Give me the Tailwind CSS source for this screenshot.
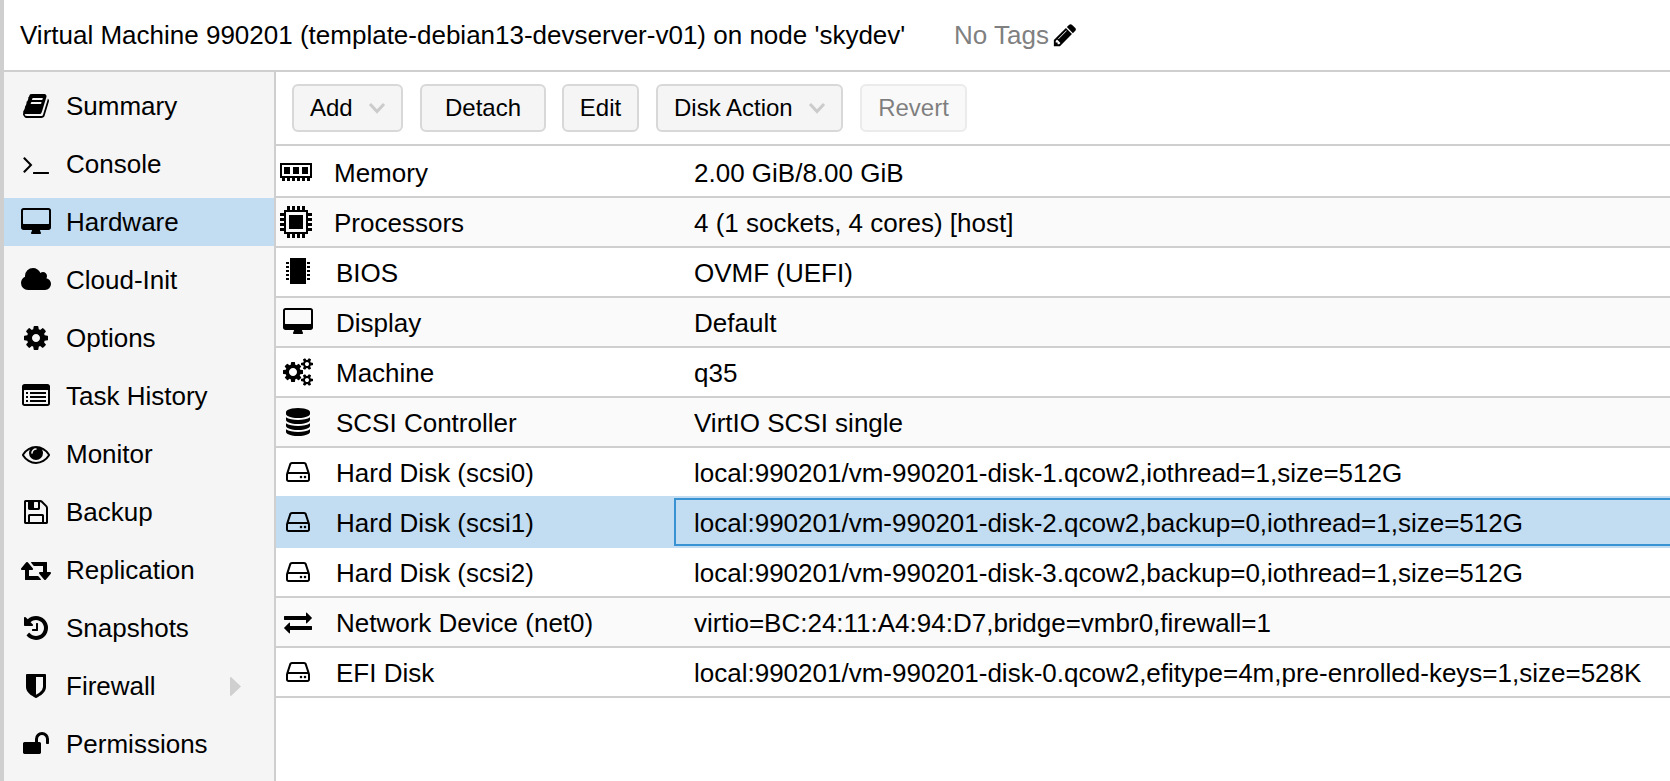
<!DOCTYPE html>
<html lang="en">
<head>
<meta charset="utf-8">
<title>Virtual Machine 990201</title>
<script src="https://cdn.jsdelivr.net/npm/@tailwindcss/browser@4"></script>
</head>
<body class="w-[1670px] h-[781px] overflow-hidden bg-white text-black text-[26px] leading-[30px] whitespace-nowrap font-['Liberation_Sans',Arial,sans-serif]">
<svg class="hidden">
<symbol id="book" viewBox="0 0 1792 1792" overflow="visible"><path d="M1703 478q40 57 18 129l-275 906q-19 64-76.5 107.5t-122.5 43.5h-923q-77 0-148.5-53.5t-99.5-131.5q-24-67-2-127 0-4 3-27t4-37q1-8-3-21.5t-3-19.5q2-11 8-21t16.5-23.5 16.5-23.5q23-38 45-91.5t30-91.5q3-10 .5-30t-.5-28q3-11 17-28t17-23q21-36 42-92t25-90q1-9-2.5-32t.5-28q4-13 22-30.5t22-22.5q19-26 42.5-84.5t27.5-96.5q1-8-3-25.5t-2-26.5q2-8 9-18t18-23 17-21q8-12 16.5-30.5t15-35 16-36 19.5-32 26.5-23.5 36-11.5 47.5 5.5l-1 3q38-9 51-9h761q74 0 114 56t18 130l-274 906q-36 119-71.5 153.5t-128.5 34.5h-869q-27 0-38 15-11 16-1 43 24 70 144 70h923q29 0 56-15.5t35-41.5l300-987q7-22 5-57 38 15 59 43zm-1064 2q-4 13 2 22.5t20 9.5h608q13 0 25.5-9.5t16.5-22.5l21-64q4-13-2-22.5t-20-9.5h-608q-13 0-25.5 9.5t-16.5 22.5zm-83 256q-4 13 2 22.5t20 9.5h608q13 0 25.5-9.5t16.5-22.5l21-64q4-13-2-22.5t-20-9.5h-608q-13 0-25.5 9.5t-16.5 22.5z"/></symbol>
<symbol id="terminal" viewBox="0 0 1792 1792" overflow="visible"><path d="M649 983l-466 466q-10 10-23 10t-23-10l-50-50q-10-10-10-23t10-23l393-393-393-393q-10-10-10-23t10-23l50-50q10-10 23-10t23 10l466 466q10 10 10 23t-10 23zm1079 457v64q0 14-9 23t-23 9h-960q-14 0-23-9t-9-23v-64q0-14 9-23t23-9h960q14 0 23 9t9 23z"/></symbol>
<symbol id="desktop" viewBox="0 0 1792 1792" overflow="visible"><path d="M1728 992v-832q0-13-9.5-22.5t-22.5-9.5h-1600q-13 0-22.5 9.5t-9.5 22.5v832q0 13 9.5 22.5t22.5 9.5h1600q13 0 22.5-9.5t9.5-22.5zm128-832v1088q0 66-47 113t-113 47h-544q0 37 16 77.5t32 71 16 43.5q0 26-19 45t-45 19h-512q-26 0-45-19t-19-45q0-14 16-44t32-70 16-78h-544q-66 0-113-47t-47-113v-1088q0-66 47-113t113-47h1600q66 0 113 47t47 113z"/></symbol>
<symbol id="cloud" viewBox="0 0 1792 1792" overflow="visible"><path d="M1856 1152q0 159-112.5 271.5t-271.5 112.5h-1088q-185 0-316.5-131.5t-131.5-316.5q0-132 71-241.5t187-163.5q-2-28-2-43 0-212 150-362t362-150q158 0 286.5 88t187.5 230q70-62 166-62 106 0 181 75t75 181q0 75-41 138 129 30 213 134.5t84 239.5z"/></symbol>
<symbol id="cog" viewBox="0 0 1792 1792" overflow="visible"><path d="M1152 896q0-106-75-181t-181-75-181 75-75 181 75 181 181 75 181-75 75-181zm512-109v222q0 12-8 23t-20 13l-185 28q-19 54-39 91 35 50 107 138 10 12 10 25t-9 23q-27 37-99 108t-94 71q-12 0-26-9l-138-108q-44 23-91 38-16 136-29 186-7 28-36 28h-222q-14 0-24.5-8.5t-11.5-21.5l-28-184q-49-16-90-37l-141 107q-10 9-25 9-14 0-25-11-126-114-165-168-7-10-7-23 0-12 8-23 15-21 51-66.5t54-70.5q-27-50-41-99l-183-27q-13-2-21-12.5t-8-23.5v-222q0-12 8-23t19-13l186-28q14-46 39-92-40-57-107-138-10-12-10-24 0-10 9-23 26-36 98.5-107.5t94.5-71.5q13 0 26 10l138 107q44-23 91-38 16-136 29-186 7-28 36-28h222q14 0 24.5 8.5t11.5 21.5l28 184q49 16 90 37l142-107q9-9 24-9 13 0 25 10 129 119 165 170 7 8 7 22 0 12-8 23-15 21-51 66.5t-54 70.5q26 50 41 98l183 28q13 2 21 12.5t8 23.5z"/></symbol>
<symbol id="list-alt" viewBox="0 0 1792 1792" overflow="visible"><path fill-rule="evenodd" d="M160 128h1472q66 0 113 47t47 113v1088q0 66-47 113t-113 47h-1472q-66 0-113-47t-47-113v-1088q0-66 47-113t113-47zM160 512q-32 0-32 32v832q0 32 32 32h1472q32 0 32-32v-832q0-32-32-32z"/><path d="M256 640h128v128h-128zM256 896h128v128h-128zM256 1152h128v128h-128zM512 640h1024v128h-1024zM512 896h1024v128h-1024zM512 1152h1024v128h-1024z"/></symbol>
<symbol id="eye" viewBox="0 0 1792 1792" overflow="visible"><path d="M1664 960q-152-236-381-353 61 104 61 225 0 185-131.5 316.5t-316.5 131.5-316.5-131.5-131.5-316.5q0-121 61-225-229 117-381 353 133 205 333.5 326.5t434.5 121.5 434.5-121.5 333.5-326.5zm-720-384q0-20-14-34t-34-14q-125 0-214.5 89.5t-89.5 214.5q0 20 14 34t34 14 34-14 14-34q0-86 61-147t147-61q20 0 34-14t14-34zm848 384q0 34-20 69-140 230-376.5 368.5t-499.5 138.5-499.5-139-376.5-368q-20-35-20-69t20-69q140-229 376.5-368t499.5-139 499.5 139 376.5 368q20 35 20 69z"/></symbol>
<symbol id="floppy" viewBox="0 0 1792 1792" overflow="visible"><path d="M512 1536h768v-384h-768v384zm896 0h128v-896q0-14-10-38.5t-20-34.5l-281-281q-10-10-34-20t-39-10v416q0 40-28 68t-68 28h-576q-40 0-68-28t-28-68v-416h-128v1280h128v-416q0-40 28-68t68-28h832q40 0 68 28t28 68v416zm-384-928v-320q0-13-9.5-22.5t-22.5-9.5h-192q-13 0-22.5 9.5t-9.5 22.5v320q0 13 9.5 22.5t22.5 9.5h192q13 0 22.5-9.5t9.5-22.5zm640 32v928q0 40-28 68t-68 28h-1344q-40 0-68-28t-28-68v-1344q0-40 28-68t68-28h928q40 0 88 20t76 48l280 280q28 28 48 76t20 88z"/></symbol>
<symbol id="retweet" viewBox="0 0 1792 1792" overflow="visible"><path d="M1216 1504q0 13-9.5 22.5t-22.5 9.5h-960q-8 0-13.5-2t-9-7-5.5-8-3-11.5-1-11.5v-600h-192q-26 0-45-19t-19-45q0-24 15-41l320-384q19-22 49-22t49 22l320 384q15 17 15 41 0 26-19 45t-45 19h-192v384h576q16 0 25 11l160 192q7 10 7 21zm640-416q0 24-15 41l-320 384q-20 23-49 23t-49-23l-320-384q-15-17-15-41 0-26 19-45t45-19h192v-384h-576q-16 0-25-12l-160-192q-7-9-7-20 0-13 9.5-22.5t22.5-9.5h960q8 0 13.5 2t9 7 5.5 8 3 11.5 1 11.5v600h192q26 0 45 19t19 45z"/></symbol>
<symbol id="history" viewBox="0 0 1792 1792" overflow="visible"><path d="M1664 896q0 156-61 298t-164 245-245 164-298 61q-172 0-327-72.5t-264-204.5q-7-10-6.5-22.5t8.5-20.5l137-138q10-9 25-9 16 2 23 12 73 95 179 147t225 52q104 0 198.5-40.5t163.5-109.5 109.5-163.5 40.5-198.5-40.5-198.5-109.5-163.5-163.5-109.5-198.5-40.5q-98 0-188 35.5t-160 101.5l137 138q31 30 14 69-17 40-59 40h-448q-26 0-45-19t-19-45v-448q0-42 40-59 39-17 69 14l130 129q107-101 244.5-156.5t284.5-55.5q156 0 298 61t245 164 164 245 61 298zm-640-288v448q0 14-9 23t-23 9h-320q-14 0-23-9t-9-23v-64q0-14 9-23t23-9h224v-352q0-14 9-23t23-9h64q14 0 23 9t9 23z"/></symbol>
<symbol id="shield" viewBox="0 0 1792 1792" overflow="visible"><path d="M1344 960v-640h-448v1137q119-63 213-137 235-184 235-360zm192-768v768q0 86-33.5 170.5t-83 150-118 127.5-126.5 103-121 77.5-89.5 49.5-42.5 20q-12 6-26 6t-26-6q-16-7-42.5-20t-89.5-49.5-121-77.5-126.5-103-118-127.5-83-150-33.5-170.5v-768q0-26 19-45t45-19h1152q26 0 45 19t19 45z"/></symbol>
<symbol id="unlock" viewBox="0 0 1792 1792" overflow="visible"><path d="M1728 576v256q0 26-19 45t-45 19h-64q-26 0-45-19t-19-45v-256q0-106-75-181t-181-75-181 75-75 181v192h96q40 0 68 28t28 68v576q0 40-28 68t-68 28h-960q-40 0-68-28t-28-68v-576q0-40 28-68t68-28h672v-192q0-185 131.5-316.5t316.5-131.5 316.5 131.5 131.5 316.5z"/></symbol>
<symbol id="pencil" viewBox="0 0 1792 1792" overflow="visible"><path d="M491 1536l91-91-235-235-91 91v107h128v128h107zm523-928q0-22-22-22-10 0-17 7l-542 542q-7 7-7 17 0 22 22 22 10 0 17-7l542-542q7-7 7-17zm-54-192l416 416-832 832h-416v-416zm683 96q0 53-37 90l-166 166-416-416 166-165q36-38 90-38 53 0 91 38l235 234q37 39 37 91z"/></symbol>
<symbol id="cogs" viewBox="0 0 1792 1792" overflow="visible"><path d="M832 896q0-106-75-181t-181-75-181 75-75 181 75 181 181 75 181-75 75-181zm768 512q0-52-38-90t-90-38-90 38-38 90q0 53 37.5 90.5t90.5 37.5 90.5-37.5 37.5-90.5zm0-1024q0-52-38-90t-90-38-90 38-38 90q0 53 37.5 90.5t90.5 37.5 90.5-37.5 37.5-90.5zm-384 421v185q0 10-7 19.5t-16 10.5l-155 24q-11 35-32 76 34 48 90 115 7 11 7 20 0 12-7 19-23 30-82.5 89.5t-78.5 59.5q-11 0-21-7l-115-90q-37 19-77 31-11 108-23 155-7 24-30 24h-186q-11 0-20-7.5t-10-17.5l-23-153q-34-10-75-31l-118 89q-7 7-20 7-11 0-21-8-144-133-144-160 0-9 7-19 10-14 41-53t47-61q-23-44-35-82l-152-24q-10-1-17-9.5t-7-19.5v-185q0-10 7-19.5t16-10.5l155-24q11-35 32-76-34-48-90-115-7-11-7-20 0-12 7-20 22-30 82-89t79-59q11 0 21 7l115 90q34-18 77-32 11-108 23-154 7-24 30-24h186q11 0 20 7.5t10 17.5l23 153q34 10 75 31l118-89q8-7 20-7 11 0 21 8 144 133 144 160 0 8-7 19-12 16-42 54t-45 60q23 48 34 82l152 23q10 2 17 10.5t7 19.5zm640 533v140q0 16-149 31-12 27-30 52 51 113 51 138 0 4-4 7-122 71-124 71-8 0-46-47t-52-68q-20 2-30 2t-30-2q-14 21-52 68t-46 47q-2 0-124-71-4-3-4-7 0-25 51-138-18-25-30-52-149-15-149-31v-140q0-16 149-31 13-29 30-52-51-113-51-138 0-4 4-7 4-2 35-20t59-34 30-16q8 0 46 46.5t52 67.5q20-2 30-2t30 2q51-71 92-112l6-2q4 0 124 70 4 3 4 7 0 25-51 138 17 23 30 52 149 15 149 31zm0-1024v140q0 16-149 31-12 27-30 52 51 113 51 138 0 4-4 7-122 71-124 71-8 0-46-47t-52-68q-20 2-30 2t-30-2q-14 21-52 68t-46 47q-2 0-124-71-4-3-4-7 0-25 51-138-18-25-30-52-149-15-149-31v-140q0-16 149-31 13-29 30-52-51-113-51-138 0-4 4-7 4-2 35-20t59-34 30-16q8 0 46 46.5t52 67.5q20-2 30-2t30 2q51-71 92-112l6-2q4 0 124 70 4 3 4 7 0 25-51 138 17 23 30 52 149 15 149 31z"/></symbol>
<symbol id="database" viewBox="0 0 1792 1792" overflow="visible"><path d="M896 768q237 0 443-43t325-127v170q0 69-103 128t-280 93.5-385 34.5-385-34.5-280-93.5-103-128v-170q119 84 325 127t443 43zm0 768q237 0 443-43t325-127v170q0 69-103 128t-280 93.5-385 34.5-385-34.5-280-93.5-103-128v-170q119 84 325 127t443 43zm0-384q237 0 443-43t325-127v170q0 69-103 128t-280 93.5-385 34.5-385-34.5-280-93.5-103-128v-170q119 84 325 127t443 43zm0-1152q208 0 385 34.5t280 93.5 103 128v128q0 69-103 128t-280 93.5-385 34.5-385-34.5-280-93.5-103-128v-128q0-69 103-128t280-93.5 385-34.5z"/></symbol>
<symbol id="hdd" viewBox="0 0 1792 1792" overflow="visible"><path d="M1168 1216q0 33-23.5 56.5t-56.5 23.5-56.5-23.5-23.5-56.5 23.5-56.5 56.5-23.5 56.5 23.5 23.5 56.5zm256 0q0 33-23.5 56.5t-56.5 23.5-56.5-23.5-23.5-56.5 23.5-56.5 56.5-23.5 56.5 23.5 23.5 56.5zm112 160v-320q0-13-9.5-22.5t-22.5-9.5h-1216q-13 0-22.5 9.5t-9.5 22.5v320q0 13 9.5 22.5t22.5 9.5h1216q13 0 22.5-9.5t9.5-22.5zm-1230-480h1180l-157-482q-4-13-16-21.5t-26-8.5h-782q-14 0-26 8.5t-16 21.5zm1358 160v320q0 66-47 113t-113 47h-1216q-66 0-113-47t-47-113v-320q0-25 16-75l197-606q17-53 63-86t101-33h782q55 0 101 33t63 86l197 606q16 50 16 75z"/></symbol>
<symbol id="exchange" viewBox="0 0 1792 1792" overflow="visible"><path d="M1792 1184v192q0 13-9.5 22.5t-22.5 9.5h-1376v192q0 13-9.5 22.5t-22.5 9.5q-12 0-24-10l-319-320q-9-9-9-22 0-14 9-23l320-320q9-9 23-9 13 0 22.5 9.5t9.5 22.5v192h1376q13 0 22.5 9.5t9.5 22.5zm0-544q0 14-9 23l-320 320q-9 9-23 9-13 0-22.5-9.5t-9.5-22.5v-192h-1376q-13 0-22.5-9.5t-9.5-22.5v-192q0-13 9.5-22.5t22.5-9.5h1376v-192q0-14 9-23t23-9q12 0 24 10l319 319q9 9 9 23z"/></symbol>
<symbol id="chevron" viewBox="0 0 18 12"><path d="M2 2l7 7.5L16 2" fill="none" stroke="#cbcbcb" stroke-width="3"/></symbol>
</svg>

<div class="flex h-[781px]">
  <div class="w-1 shrink-0 bg-[#cfcfcf]"></div>
  <div class="flex-1 min-w-0 flex flex-col">
    <header class="h-[72px] shrink-0 flex items-center border-b-2 border-[#cfcfcf] pl-4">
      <h1 class="w-[934px]">Virtual Machine 990201 (template-debian13-devserver-v01) on node 'skydev'</h1>
      <span class="w-[98px] text-[#808080]">No Tags</span>
      <svg class="size-[26px] overflow-visible"><use href="#pencil"/></svg>
    </header>
    <div class="flex-1 min-h-0 flex">
      <nav class="w-[272px] shrink-0 box-border border-r-2 border-[#cfcfcf] bg-[#f5f5f5] pt-[10px] flex flex-col gap-[10px] overflow-hidden">
        <a class="h-12 shrink-0 flex items-center gap-4 pl-[18px]"><svg class="size-7 overflow-visible"><use href="#book"/></svg>Summary</a>
        <a class="h-12 shrink-0 flex items-center gap-4 pl-[18px]"><svg class="size-7 overflow-visible"><use href="#terminal"/></svg>Console</a>
        <a class="h-12 shrink-0 flex items-center gap-4 pl-[18px] bg-[#c2ddf2]"><svg class="size-7 overflow-visible"><use href="#desktop"/></svg>Hardware</a>
        <a class="h-12 shrink-0 flex items-center gap-4 pl-[18px]"><svg class="size-7 overflow-visible"><use href="#cloud"/></svg>Cloud-Init</a>
        <a class="h-12 shrink-0 flex items-center gap-4 pl-[18px]"><svg class="size-7 overflow-visible"><use href="#cog"/></svg>Options</a>
        <a class="h-12 shrink-0 flex items-center gap-4 pl-[18px]"><svg class="size-7 overflow-visible"><use href="#list-alt"/></svg>Task History</a>
        <a class="h-12 shrink-0 flex items-center gap-4 pl-[18px]"><svg class="size-7 overflow-visible"><use href="#eye"/></svg>Monitor</a>
        <a class="h-12 shrink-0 flex items-center gap-4 pl-[18px]"><svg class="size-7 overflow-visible"><use href="#floppy"/></svg>Backup</a>
        <a class="h-12 shrink-0 flex items-center gap-4 pl-[18px]"><svg class="size-7 overflow-visible"><use href="#retweet"/></svg>Replication</a>
        <a class="h-12 shrink-0 flex items-center gap-4 pl-[18px]"><svg class="size-7 overflow-visible"><use href="#history"/></svg>Snapshots</a>
        <a class="h-12 shrink-0 flex items-center gap-4 pl-[18px] pr-[33px]"><svg class="size-7 overflow-visible"><use href="#shield"/></svg>Firewall<svg class="ml-auto w-[11px] h-[19px]" viewBox="0 0 11 19"><path d="M0 1q0-1 1 -1L11 9.5 1 19q-1 0-1-1z" fill="#cfcfcf"/></svg></a>
        <a class="h-12 shrink-0 flex items-center gap-4 pl-[18px]"><svg class="size-7 overflow-visible"><use href="#unlock"/></svg>Permissions</a>
      </nav>
      <main class="flex-1 min-w-0">
        <div class="h-[74px] border-b-2 border-[#cfcfcf] flex items-center pl-4 text-2xl leading-7">
          <button class="h-12 w-[111px] rounded-md border-2 border-[#d8d8d8] bg-[#f5f5f5] flex items-center justify-between pl-4 pr-[15px]">Add<svg class="w-[18px] h-3"><use href="#chevron"/></svg></button>
          <button class="h-12 w-[126px] ml-[17px] rounded-md border-2 border-[#d8d8d8] bg-[#f5f5f5]">Detach</button>
          <button class="h-12 w-[77px] ml-4 rounded-md border-2 border-[#d8d8d8] bg-[#f5f5f5]">Edit</button>
          <button class="h-12 w-[187px] ml-[17px] rounded-md border-2 border-[#d8d8d8] bg-[#f5f5f5] flex items-center justify-between pl-4 pr-[15px]">Disk Action<svg class="w-[18px] h-3"><use href="#chevron"/></svg></button>
          <button class="h-12 w-[107px] ml-[17px] rounded-md border-2 border-[#d8d8d8] bg-[#f5f5f5] opacity-50">Revert</button>
        </div>
        <div class="pt-0.5">
          <div class="h-[50px] flex items-center border-b-2 border-[#cfcfcf] pl-1">
            <svg class="w-8 h-[18px]" viewBox="0 0 32 18" shape-rendering="crispEdges"><path fill-rule="evenodd" d="M0 0h32v15H0zM2 2v11h28V2z"/><path d="M4 4h6v7H4zM13 4h6v7h-6zM22 4h6v7h-6zM2 15h3v3H2zM7 15h3v3H7zM12 15h3v3h-3zM17 15h3v3h-3zM22 15h3v3h-3zM27 15h3v3h-3z"/></svg>
            <span class="w-[360px] pl-[22px] pt-0.5">Memory</span><span class="pt-0.5 pl-[22px]">2.00 GiB/8.00 GiB</span>
          </div>
          <div class="h-[50px] flex items-center border-b-2 border-[#cfcfcf] bg-[#fafafa] pl-1">
            <svg class="size-8" viewBox="0 0 32 32" shape-rendering="crispEdges"><path fill-rule="evenodd" d="M4 4h24v24H4zM6 6v20h20V6z"/><path d="M9 9h14v14H9zM7 0h3v4H7zM12 0h3v4h-3zM17 0h3v4h-3zM22 0h3v4h-3zM7 28h3v4H7zM12 28h3v4h-3zM17 28h3v4h-3zM22 28h3v4h-3zM0 7h4v3H0zM0 12h4v3H0zM0 17h4v3H0zM0 22h4v3H0zM28 7h4v3h-4zM28 12h4v3h-4zM28 17h4v3h-4zM28 22h4v3h-4z"/></svg>
            <span class="w-[360px] pl-[22px] pt-0.5">Processors</span><span class="pt-0.5 pl-[22px]">4 (1 sockets, 4 cores) [host]</span>
          </div>
          <div class="h-[50px] flex items-center border-b-2 border-[#cfcfcf] pl-[10px]">
            <svg class="w-6 h-[26px] mb-0.5" viewBox="0 0 24 26" shape-rendering="crispEdges"><path d="M4 0h16v26H4zM0 4h3v2H0zM0 8h3v2H0zM0 12h3v2H0zM0 16h3v2H0zM0 20h3v2H0zM21 4h3v2h-3zM21 8h3v2h-3zM21 12h3v2h-3zM21 16h3v2h-3zM21 20h3v2h-3z"/></svg>
            <span class="w-[362px] pl-[26px] pt-0.5">BIOS</span><span class="pt-0.5 pl-[22px]">OVMF (UEFI)</span>
          </div>
          <div class="h-[50px] flex items-center border-b-2 border-[#cfcfcf] bg-[#fafafa] pl-2"><svg class="size-7 overflow-visible"><use href="#desktop"/></svg><span class="w-[360px] pl-6 pt-0.5">Display</span><span class="pt-0.5 pl-[22px]">Default</span></div>
          <div class="h-[50px] flex items-center border-b-2 border-[#cfcfcf] pl-2"><svg class="size-7 overflow-visible"><use href="#cogs"/></svg><span class="w-[360px] pl-6 pt-0.5">Machine</span><span class="pt-0.5 pl-[22px]">q35</span></div>
          <div class="h-[50px] flex items-center border-b-2 border-[#cfcfcf] bg-[#fafafa] pl-2"><svg class="size-7 overflow-visible"><use href="#database"/></svg><span class="w-[360px] pl-6 pt-0.5">SCSI Controller</span><span class="pt-0.5 pl-[22px]">VirtIO SCSI single</span></div>
          <div class="h-[50px] flex items-center border-b-2 border-[#c2ddf2] pl-2"><svg class="size-7 overflow-visible"><use href="#hdd"/></svg><span class="w-[360px] pl-6 pt-0.5">Hard Disk (scsi0)</span><span class="pt-0.5 pl-[22px]">local:990201/vm-990201-disk-1.qcow2,iothread=1,size=512G</span></div>
          <div class="h-[50px] flex items-center border-b-2 border-[#c2ddf2] bg-[#c2ddf2] pl-2"><svg class="size-7 overflow-visible"><use href="#hdd"/></svg><span class="w-[362px] pl-6 pt-0.5">Hard Disk (scsi1)</span><span class="flex-1 h-12 flex items-center border-2 border-r-0 border-[#3892d4] pt-0.5 pl-[18px]">local:990201/vm-990201-disk-2.qcow2,backup=0,iothread=1,size=512G</span></div>
          <div class="h-[50px] flex items-center border-b-2 border-[#cfcfcf] pl-2"><svg class="size-7 overflow-visible"><use href="#hdd"/></svg><span class="w-[360px] pl-6 pt-0.5">Hard Disk (scsi2)</span><span class="pt-0.5 pl-[22px]">local:990201/vm-990201-disk-3.qcow2,backup=0,iothread=1,size=512G</span></div>
          <div class="h-[50px] flex items-center border-b-2 border-[#cfcfcf] bg-[#fafafa] pl-2"><svg class="size-7 overflow-visible"><use href="#exchange"/></svg><span class="w-[360px] pl-6 pt-0.5">Network Device (net0)</span><span class="pt-0.5 pl-[22px]">virtio=BC:24:11:A4:94:D7,bridge=vmbr0,firewall=1</span></div>
          <div class="h-[50px] flex items-center border-b-2 border-[#cfcfcf] pl-2"><svg class="size-7 overflow-visible"><use href="#hdd"/></svg><span class="w-[360px] pl-6 pt-0.5">EFI Disk</span><span class="pt-0.5 pl-[22px]">local:990201/vm-990201-disk-0.qcow2,efitype=4m,pre-enrolled-keys=1,size=528K</span></div>
        </div>
      </main>
    </div>
  </div>
</div>
</body>
</html>
